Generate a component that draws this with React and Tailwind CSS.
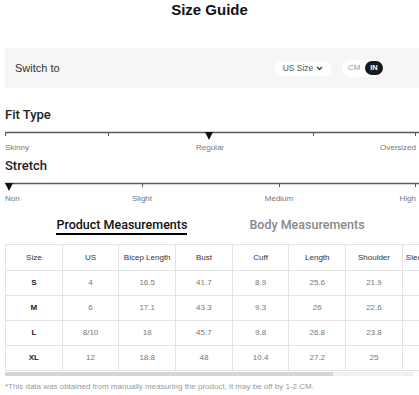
import React from "react";

function Scale({ ticks, marker, labels }) {
  return (
    <div className="w-[414px]">
      <svg width="414" height="11" className="block">
        <line x1="0" y1="1.5" x2="414" y2="1.5" stroke="#5a5a5a" strokeWidth="1.5" />
        {ticks.map((t) => (
          <line key={t} x1={t + 0.5} y1="1.5" x2={t + 0.5} y2="5" stroke="#5a5a5a" strokeWidth="1" />
        ))}
        <polygon points={`${marker - 4},1 ${marker + 4},1 ${marker},9`} fill="#111" />
      </svg>
      <div className="relative h-[12px] text-[8px] leading-[12px] text-[#777]">
        {labels.map((l) => (
          <span key={l.t} className={"absolute top-0 whitespace-nowrap " + l.c}>
            {l.t}
          </span>
        ))}
      </div>
    </div>
  );
}

const rows = [
  ["S", "4", "16.5", "41.7", "8.9", "25.6", "21.9", ""],
  ["M", "6", "17.1", "43.3", "9.3", "26", "22.6", ""],
  ["L", "8/10", "18", "45.7", "9.8", "26.8", "23.8", ""],
  ["XL", "12", "18.8", "48", "10.4", "27.2", "25", ""],
];
const head = ["Size", "US", "Bicep Length", "Bust", "Cuff", "Length", "Shoulder", "Sleeve"];

export default function App() {
  return (
    <div className="w-[419px] h-[395px] overflow-hidden bg-white font-['Liberation_Sans',Arial,sans-serif]">
      <div className="h-[20px] flex items-center justify-center text-[15px] font-bold text-[#111] leading-[20px]">
        Size Guide
      </div>
      <div className="mt-[28px] ml-[5px] h-[40px] bg-[#f6f6f6] flex items-center pl-[10px] pr-[35px]">
        <span className="text-[11px] text-[#333]">Switch to</span>
        <div className="ml-auto flex items-center gap-[10px]">
          <div className="w-[58px] h-[15px] rounded-full bg-white flex items-center justify-center gap-[3px] text-[8.5px] text-[#555]">
            US Size
            <svg width="7" height="5" viewBox="0 0 7 5">
              <path d="M1 1 L3.5 3.5 L6 1" stroke="#444" strokeWidth="1.4" fill="none" />
            </svg>
          </div>
          <div className="w-[42px] h-[17px] rounded-full bg-white flex items-center pl-[6px] pr-[1px]">
            <span className="text-[8px] text-[#999]">CM</span>
            <span className="ml-auto w-[18px] h-[14px] rounded-full bg-[#1a1a1a] text-white text-[7.5px] font-bold flex items-center justify-center">
              IN
            </span>
          </div>
        </div>
      </div>

      <div className="ml-[5px]">
        <div className="mt-[19px] h-[16px] leading-[16px] text-[13px] font-medium text-[#222] font-['Roboto',sans-serif]">
          Fit Type
        </div>
        <div className="mt-[8px]">
          <Scale
            ticks={[0, 103, 308, 410]}
            marker={204}
            labels={[
              { t: "Skinny", c: "left-0" },
              { t: "Regular", c: "left-[205px] -translate-x-1/2" },
              { t: "Oversized", c: "right-[3px]" },
            ]}
          />
        </div>
        <div className="mt-[4px] h-[16px] leading-[16px] text-[13px] font-medium text-[#222] font-['Roboto',sans-serif]">
          Stretch
        </div>
        <div className="mt-[8px]">
          <Scale
            ticks={[137, 274, 410]}
            marker={4}
            labels={[
              { t: "Non", c: "left-0" },
              { t: "Slight", c: "left-[137px] -translate-x-1/2" },
              { t: "Medium", c: "left-[274px] -translate-x-1/2" },
              { t: "High", c: "right-[3px]" },
            ]}
          />
        </div>
      </div>

      <div className="mt-[12px] flex justify-center gap-[62px] pl-[2px] font-['Roboto',sans-serif] text-[12.5px] font-medium leading-[16px]">
        <span className="text-[#111] border-b-2 border-black">Product Measurements</span>
        <span className="text-[#888]">Body Measurements</span>
      </div>

      <div className="mt-[9px] ml-[5px] w-[460px]">
        <div className="grid grid-cols-[repeat(8,56.7px)] border-t border-l border-[#e3e3e3]">
          {head.map((h, i) => (
            <div
              key={h}
              className={
                "h-[26px] border-r border-b border-[#e3e3e3] flex items-center text-[8px] text-[#333] whitespace-nowrap overflow-hidden " +
                (i === 7 ? "justify-start pl-[3px]" : "justify-center")
              }
            >
              {h}
            </div>
          ))}
          {rows.map((r) =>
            r.map((v, i) => (
              <div
                key={r[0] + i}
                className={
                  "h-[25px] border-r border-b border-[#e3e3e3] flex items-center justify-center text-[8px] " +
                  (i === 0 ? "font-bold text-[#222]" : "text-[#777]")
                }
              >
                {v}
              </div>
            ))
          )}
        </div>
      </div>
      <div className="mt-[1px] ml-[5px] w-[408px] h-[4px] bg-[#f1f1f1]">
        <div className="w-[328px] h-[4px] bg-[#d6d6d6]" />
      </div>
      <div className="mt-[5px] ml-[5px] text-[8px] leading-[12px] text-[#999] whitespace-nowrap">
        *This data was obtained from manually measuring the product, it may be off by 1-2 CM.
      </div>
    </div>
  );
}
